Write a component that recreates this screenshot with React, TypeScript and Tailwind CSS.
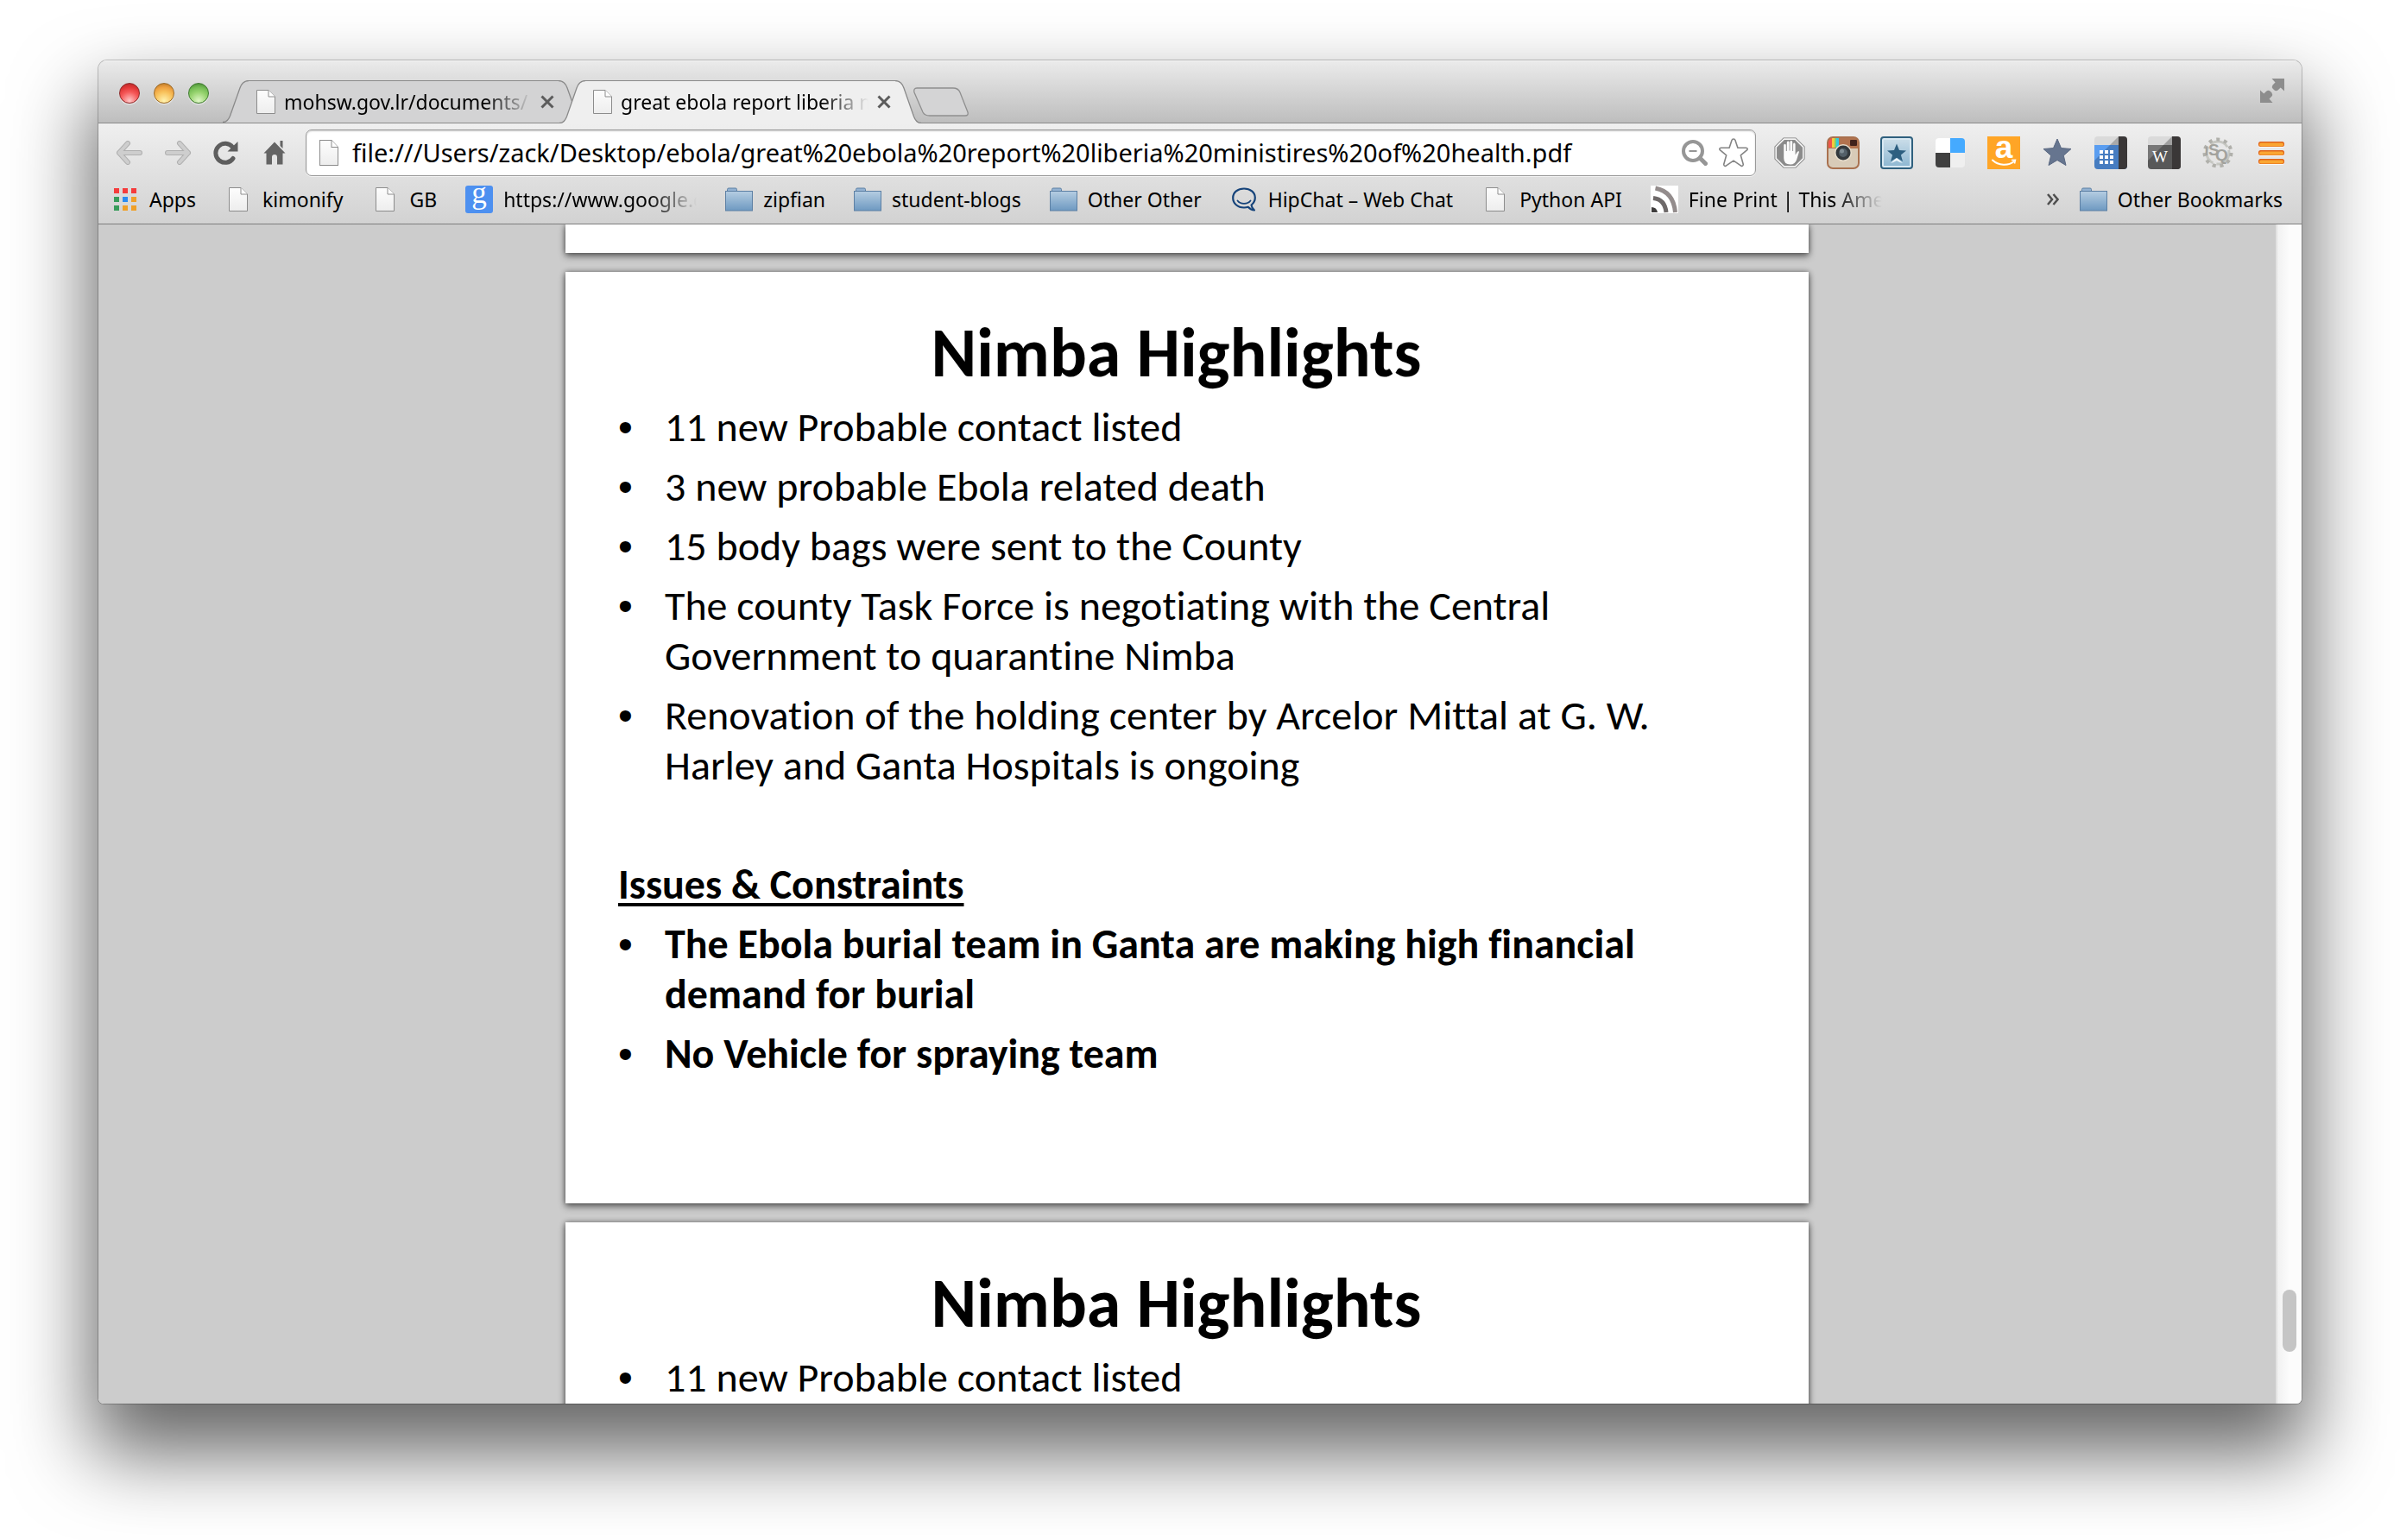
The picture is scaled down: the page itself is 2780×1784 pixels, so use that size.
import type { ReactNode } from 'react';

const UI_FONT = 'font-["Noto_Sans","Open_Sans",sans-serif]';
const FADE = '[mask-image:linear-gradient(to_right,black_calc(100%-56px),transparent)]';

function PageIcon({ className }: { className: string }) {
  return (
    <svg viewBox="0 0 22 28" preserveAspectRatio="none" className={className} aria-hidden="true">
      <defs>
        <linearGradient id="paper" x1="0" y1="0" x2="0" y2="1">
          <stop offset="0" stopColor="#fdfdfd" />
          <stop offset="1" stopColor="#ededed" />
        </linearGradient>
      </defs>
      <path d="M.5.5H14L21.500 8V27.500H.5Z" fill="url(#paper)" stroke="#8c8c8c" />
      <path d="M14 .5V8H21.500" fill="#fff" stroke="#8c8c8c" />
    </svg>
  );
}

function FolderIcon() {
  return (
    <svg viewBox="0 0 32 28" className="h-7 w-8" aria-hidden="true">
      <defs>
        <linearGradient id="folder" x1="0" y1="0" x2="0" y2="1">
          <stop offset="0" stopColor="#b5cde2" />
          <stop offset="1" stopColor="#6e99c1" />
        </linearGradient>
      </defs>
      <path d="M2.500 5V2.500Q2.500 1 4 1H12Q13.500 1 13.500 2.500V5" fill="#93b2d2" stroke="#5d80a4" />
      <rect x=".5" y="4.500" width="31" height="22.500" fill="url(#folder)" stroke="#5d80a4" />
    </svg>
  );
}

function AppsIcon() {
  const colors = ['#f53b3b', '#f53b3b', '#f53b3b', '#379c5a', '#2a8bf2', '#f0a028', '#379c5a', '#f0a028', '#f0a028'];
  return (
    <svg viewBox="0 0 26 26" className="h-[26px] w-[26px]" aria-hidden="true">
      {colors.map((c, i) => (
        <rect key={i} x={(i % 3) * 10} y={Math.floor(i / 3) * 10} width="6" height="6" fill={c} />
      ))}
    </svg>
  );
}

function GoogleIcon() {
  return (
    <svg viewBox="0 0 32 32" className="h-8 w-8" aria-hidden="true">
      <rect width="32" height="32" rx="3" fill="#4d90f0" />
      <text x="16" y="20" textAnchor="middle" fontSize="35" fill="#fff" className='font-["Liberation_Serif",serif]'>g</text>
    </svg>
  );
}

function HipChatIcon() {
  return (
    <svg viewBox="0 0 28 28" className="h-7 w-7" fill="none" stroke="#15437a" aria-hidden="true">
      <path d="M22.500 20.500C25.500 18 26.800 15 26.800 12C26.800 5.800 21.200 1.500 14 1.500S1.200 5.800 1.200 12.200S6.500 23.500 14 23.500C15.800 23.500 17.300 23.300 18.700 22.800C20.500 24.800 23 26.500 26 26.500C23.500 24.500 22.700 22.500 22.500 20.500Z" strokeWidth="2.200" strokeLinejoin="round" />
      <path d="M6.500 15.500C10 20 18 20 21.500 15.500" strokeWidth="1.800" strokeLinecap="round" />
    </svg>
  );
}

function FeedIcon() {
  return (
    <svg viewBox="0 0 32 32" className="h-8 w-8" aria-hidden="true">
      <rect width="32" height="32" fill="#fff" />
      <path d="M1 31V25Q7 25 8 31Z" fill="#3e3c3c" />
      <path d="M3 14.500Q16.500 16 18 31" fill="none" stroke="#6e6969" strokeWidth="5" />
      <path d="M5.500 3Q26.500 7 28.500 31" fill="none" stroke="#938c8c" strokeWidth="5" />
    </svg>
  );
}

const octagon = (c: number, r: number) =>
  Array.from({ length: 8 }, (_, i) => {
    const a = Math.PI / 8 + (i * Math.PI) / 4;
    return `${(c + r * Math.cos(a)).toFixed(2)},${(c + r * Math.sin(a)).toFixed(2)}`;
  }).join(' ');

function AdBlockIcon() {
  return (
    <svg viewBox="0 0 38 38" className="h-[38px] w-[38px]" aria-hidden="true">
      <polygon points={octagon(19, 19)} fill="#7c7c7c" />
      <polygon points={octagon(19, 18)} fill="#f4f4f4" />
      <polygon points={octagon(19, 16.2)} fill="#8b8b8b" />
      <path d="M12.200 21V10.500Q12.200 8.800 13.500 8.800T14.800 10.500V17H15.800V7.200Q15.800 5.400 17.200 5.400T18.600 7.200V16.500H19.400V6.600Q19.400 4.900 20.800 4.900T22.200 6.600V17H23.100V9.200Q23.100 7.600 24.300 7.600T25.600 9.200V21.500L28 17.700Q29.200 16.700 30.100 17.600L27.300 26.500Q25.500 32.500 19.800 32.500Q12.200 32.500 12.200 25Z" fill="#fcfcfc" />
    </svg>
  );
}

function CameraIcon() {
  return (
    <svg viewBox="0 0 38 38" className="h-[38px] w-[38px]" aria-hidden="true">
      <defs>
        <clipPath id="camera-body"><rect x="1" y="1" width="36" height="36" rx="6" /></clipPath>
      </defs>
      <g clipPath="url(#camera-body)">
        <rect width="38" height="38" fill="#d8cbb8" />
        <rect width="38" height="14" fill="#b2734f" />
        <rect x="2" width="4" height="13" fill="#f0564a" />
        <rect x="6" width="3" height="13" fill="#f5c93d" />
        <rect x="9" width="2" height="13" fill="#7fd36b" />
        <rect x="11" width="3" height="13" fill="#35c8e0" />
        <rect x="27" y="4" width="8" height="7" rx="1" fill="#3f211b" />
      </g>
      <rect x="1" y="1" width="36" height="36" rx="6" fill="none" stroke="#a9714f" strokeWidth="2" />
      <circle cx="19" cy="19" r="10" fill="#e6dccb" />
      <circle cx="19" cy="19" r="8.500" fill="#33393d" />
      <circle cx="19" cy="19" r="5" fill="#536069" />
      <circle cx="17.500" cy="17" r="2.500" fill="#7f8d95" />
    </svg>
  );
}

function StarTileIcon() {
  return (
    <svg viewBox="0 0 38 38" className="h-[38px] w-[38px]" aria-hidden="true">
      <defs>
        <linearGradient id="tile" x1="0" y1="0" x2="0" y2="1">
          <stop offset="0" stopColor="#c9dce8" />
          <stop offset="1" stopColor="#8fb8d2" />
        </linearGradient>
      </defs>
      <rect x="1" y="1" width="36" height="36" rx="3" fill="#d8e8f2" stroke="#2f607e" strokeWidth="2" />
      <rect x="4" y="4" width="30" height="30" fill="url(#tile)" />
      <path d="M12 31L19 25L26 31L23 30L19 28L15 30Z" fill="#f4f9fc" />
      <path d="M19 8.500L22 16L30 16.600L23.900 21.500L26 29L19 24.800L12 29L14.100 21.500L8 16.600L16 16Z" fill="#2d5f80" />
    </svg>
  );
}

function DeliciousIcon() {
  return (
    <svg viewBox="0 0 38 38" className="h-[38px] w-[38px]" aria-hidden="true">
      <defs>
        <clipPath id="quad"><rect x="2" y="2" width="34" height="34" rx="4" /></clipPath>
      </defs>
      <g clipPath="url(#quad)">
        <rect x="2" y="2" width="17" height="17" fill="#fff" />
        <rect x="19" y="2" width="17" height="17" fill="#45aaff" />
        <rect x="2" y="19" width="17" height="17" fill="#404040" />
        <rect x="19" y="19" width="17" height="17" fill="#efefef" />
      </g>
    </svg>
  );
}

function AmazonIcon() {
  return (
    <svg viewBox="0 0 38 38" className="h-[38px] w-[38px]" aria-hidden="true">
      <rect width="38" height="38" fill="#ffa526" />
      <text x="19" y="25" textAnchor="middle" fontSize="37" fill="#fff" className='font-["Liberation_Sans",sans-serif] font-bold'>a</text>
      <path d="M6 27.500C13 34 24 34.500 31 29" fill="none" stroke="#fff" strokeWidth="2" strokeLinecap="round" />
      <path d="M28 27.500L32.500 27.300L31.500 31.500" fill="none" stroke="#fff" strokeWidth="1.500" />
    </svg>
  );
}

function BlueStarIcon() {
  return (
    <svg viewBox="0 0 38 38" className="h-[38px] w-[38px]" aria-hidden="true">
      <path d="M19 3L23.500 13.600L35 14.500L26.300 22.200L29 33.500L19 27.500L9 33.500L11.700 22.200L3 14.500L14.500 13.600Z" fill="#66758f" stroke="#596781" strokeLinejoin="round" />
    </svg>
  );
}

function BookIcon({ id, light, dark, topDark, children }: { id: string; light: string; dark: string; topDark: string; children: ReactNode }) {
  return (
    <svg viewBox="0 0 38 38" className="h-[38px] w-[38px]" aria-hidden="true">
      <defs>
        <clipPath id={id}><rect width="38" height="38" rx="4" /></clipPath>
      </defs>
      <g clipPath={`url(#${id})`}>
        <rect width="38" height="10" fill="#dadada" />
        <rect y="10" width="38" height="28" fill={dark} />
        <path d="M0 10H18L0 28Z" fill={light} />
        <path d="M18 10L28 0V10Z" fill={topDark} />
        <rect x="28" width="10" height="38" fill="#3a3737" />
      </g>
      {children}
    </svg>
  );
}

function CalendarIcon() {
  return (
    <BookIcon id="cal" light="#5a9df0" dark="#467cc0" topDark="#a9a9a9">
      {[0, 1, 2].flatMap((r) => [0, 1, 2].map((c) => (
        <rect key={`${r}${c}`} x={6 + c * 6} y={16 + r * 6} width="4" height="4" fill="#fff" />
      )))}
    </BookIcon>
  );
}

function WikiIcon() {
  return (
    <BookIcon id="wiki" light="#777" dark="#585858" topDark="#a0a0a0">
      <text x="14" y="30" textAnchor="middle" fontSize="19" fill="#fff" className='font-["Liberation_Serif",serif]'>W</text>
    </BookIcon>
  );
}

function GearIcon() {
  return (
    <svg viewBox="0 0 38 38" className="h-[38px] w-[38px]" aria-hidden="true">
      <circle cx="19" cy="19" r="13" fill="none" stroke="#c6c7c2" strokeWidth="3" strokeDasharray="22 4" />
      <circle cx="19" cy="19" r="15.500" fill="none" stroke="#b0b0ab" strokeWidth="4" strokeDasharray="4 4.850" />
      <g fill="#a2a29d" className='font-["Liberation_Sans",sans-serif] font-bold'>
        <text x="4" y="22" fontSize="14">I</text>
        <text x="8" y="22" fontSize="19">S</text>
        <text x="16" y="28" fontSize="19">Q</text>
      </g>
    </svg>
  );
}

function MenuIcon() {
  return (
    <svg viewBox="0 0 38 38" className="h-[38px] w-[38px]" aria-hidden="true">
      {[6, 16, 26].map((y) => (
        <g key={y}>
          <rect x="4" y={y + 1} width="30" height="6" rx="2.500" fill="#fff" opacity=".7" />
          <rect x="4" y={y} width="30" height="6" rx="2.500" fill="#e0641a" />
          <rect x="5" y={y + 1.5} width="28" height="4" rx="2" fill="#faa632" />
        </g>
      ))}
    </svg>
  );
}

function BackIcon({ flip }: { flip?: boolean }) {
  return (
    <svg viewBox="0 0 32 28" className={flip ? 'h-7 w-8 -scale-x-100' : 'h-7 w-8'} fill="none" strokeLinecap="round" strokeLinejoin="round" aria-hidden="true">
      <path d="M14 3L4 14L14 25M4 14H28" stroke="#b0b0b0" strokeWidth="6" />
      <path d="M14 3L4 14L14 25M4 14H28" stroke="#cecece" strokeWidth="4" />
    </svg>
  );
}

function ReloadIcon() {
  return (
    <svg viewBox="0 0 32 28" className="h-7 w-8" aria-hidden="true">
      <path d="M23.500 7.500A11 11 0 1 0 24 20.500" fill="none" stroke="#5e5e5e" strokeWidth="5" strokeLinecap="round" />
      <path d="M29.500 1V12.500H17.500Z" fill="#5e5e5e" />
    </svg>
  );
}

function HomeIcon() {
  return (
    <svg viewBox="0 0 32 28" className="h-7 w-8" fill="#646464" aria-hidden="true">
      <path d="M22.500 0H25.500V9L22.500 6Z" />
      <path d="M16 1.500L28.500 14.500H25.500V27.500H19V19Q19 16 16 16T13 19V27.500H6.500V14.500H3.500Z" />
    </svg>
  );
}

function ZoomOutIcon() {
  return (
    <svg viewBox="0 0 30 30" className="h-[30px] w-[30px]" fill="none" stroke="#969696" aria-hidden="true">
      <circle cx="13" cy="13" r="11" strokeWidth="4" />
      <path d="M8.500 13H17.500" strokeWidth="2" />
      <path d="M21 21L27.500 27.500" strokeWidth="5" strokeLinecap="round" />
    </svg>
  );
}

function StarOutlineIcon() {
  return (
    <svg viewBox="0 0 36 36" className="h-9 w-9" aria-hidden="true">
      <path d="M18 2Q19.500 2 20 3.500L22.900 12.200H32.500Q35 12.800 33.800 14.700L26.300 20.800L29.300 31.500Q29 34 26.800 33.200L18 27.200L9.200 33.200Q7 34 6.700 31.500L9.700 20.800L2.200 14.700Q1 12.800 3.500 12.200H13.100L16 3.500Q16.500 2 18 2Z" fill="#fff" stroke="#848484" strokeWidth="1.600" strokeLinejoin="round" />
    </svg>
  );
}

function FullscreenIcon() {
  return (
    <svg viewBox="0 0 28 28" className="h-7 w-7" fill="#8d8d8d" aria-hidden="true">
      <path d="M28 0V14.500L23.700 10.500L20.500 13.500Q18.500 14.800 16.500 13.500L14.500 11.500Q13.200 9.500 14.500 7.500L17.500 4.500L13.500 0Z" />
      <path d="M0 28V13.500L4.300 17.500L7.500 14.500Q9.500 13.200 11.500 14.500L13.500 16.500Q14.800 18.500 13.500 20.500L10.500 23.500L14.500 28Z" />
    </svg>
  );
}

function TabEdge({ fill, flip }: { fill: string; flip?: boolean }) {
  return (
    <svg viewBox="0 0 30 50" preserveAspectRatio="none" className={flip ? 'h-full w-[30px] shrink-0 -scale-x-100' : 'h-full w-[30px] shrink-0'} aria-hidden="true">
      <path d="M0 50C5 50 7 46 8.500 42L20 9C22 3 25 .5 30 .5V50Z" fill={fill} />
      <path d="M0 49.500C5 49.500 7 46 8.500 42L20 9C22 3 25 .5 30 .5" fill="none" stroke="#8a8a8a" strokeWidth="1.300" />
    </svg>
  );
}

function Tab({ title, active }: { title: string; active?: boolean }) {
  const fill = active ? '#efefef' : '#d3d3d4';
  return (
    <div className={active ? 'z-10 -ml-[29px] flex h-[50px] w-[419px]' : 'mb-px flex h-[49px] w-[419px]'}>
      <TabEdge fill={fill} />
      <div className={`flex min-w-0 flex-1 items-center border-t border-[#8a8a8a] pr-[5px] pb-px pl-[9px] ${active ? 'bg-[#efefef]' : 'bg-[#d3d3d4]'}`}>
        <PageIcon className="h-7 w-[22px] shrink-0" />
        <button role="tab" aria-selected={!!active} className={`ml-[10px] min-w-0 flex-1 overflow-hidden text-left leading-[30px] whitespace-nowrap ${FADE}`}>
          {title}
        </button>
        <button aria-label={`Close ${title}`} className="ml-[10px] shrink-0">
          <svg viewBox="0 0 16 16" className="h-4 w-4" stroke="#5c5c5c" strokeWidth="3" aria-hidden="true">
            <path d="M1.500 1.500L14.500 14.500M14.500 1.500L1.500 14.500" />
          </svg>
        </button>
      </div>
      <TabEdge fill={fill} flip />
    </div>
  );
}

const LIGHTS = [
  { label: 'Close', css: 'border-[#8e2a2a] bg-[radial-gradient(circle_at_50%_90%,#ffc9c9_0%,#f65a5a_45%,#e23838_70%,#a82525_100%)]' },
  { label: 'Minimize', css: 'border-[#9a6a28] bg-[radial-gradient(circle_at_50%_90%,#fff3b0_0%,#f8c25c_45%,#eda040_70%,#a86a20_100%)]' },
  { label: 'Zoom', css: 'border-[#3f7a30] bg-[radial-gradient(circle_at_50%_90%,#e0f8c8_0%,#98d470_45%,#74bc54_70%,#3c7a2c_100%)]' },
];

const BOOKMARKS: { label: string; icon: ReactNode; fade?: boolean }[] = [
  { label: 'Apps', icon: <AppsIcon /> },
  { label: 'kimonify', icon: <PageIcon className="h-7 w-[22px]" /> },
  { label: 'GB', icon: <PageIcon className="h-7 w-[22px]" /> },
  { label: 'https://www.google.com', icon: <GoogleIcon />, fade: true },
  { label: 'zipfian', icon: <FolderIcon /> },
  { label: 'student-blogs', icon: <FolderIcon /> },
  { label: 'Other Other', icon: <FolderIcon /> },
  { label: 'HipChat – Web Chat', icon: <HipChatIcon /> },
  { label: 'Python API', icon: <PageIcon className="h-7 w-[22px]" /> },
  { label: 'Fine Print | This American', icon: <FeedIcon />, fade: true },
];

const EXTENSIONS: { label: string; icon: ReactNode }[] = [
  { label: 'AdBlock', icon: <AdBlockIcon /> },
  { label: 'Instagram', icon: <CameraIcon /> },
  { label: 'Bookmark tile', icon: <StarTileIcon /> },
  { label: 'Delicious', icon: <DeliciousIcon /> },
  { label: 'Amazon', icon: <AmazonIcon /> },
  { label: 'Favourites', icon: <BlueStarIcon /> },
  { label: 'Calendar', icon: <CalendarIcon /> },
  { label: 'Wikipedia', icon: <WikiIcon /> },
  { label: 'Settings', icon: <GearIcon /> },
  { label: 'Menu', icon: <MenuIcon /> },
];

const HIGHLIGHTS = [
  '11 new Probable contact listed',
  '3 new probable Ebola related death',
  '15 body bags were sent to the County',
  'The county Task Force is negotiating with the Central Government to quarantine Nimba',
  'Renovation of the holding center by Arcelor Mittal at G. W. Harley and Ganta Hospitals is ongoing',
];

const ISSUES = ['The Ebola burial team in Ganta are making high financial demand for burial', 'No Vehicle for spraying team'];

const PAPER = 'w-full max-w-[1440px] shrink-0 bg-white shadow-[0_0_6px_rgba(0,0,0,0.45),0_4px_8px_rgba(0,0,0,0.45)]';

function Bullets({ items }: { items: string[] }) {
  return (
    <ul className="flex flex-col gap-[11px]">
      {items.map((item) => (
        <li key={item} className="flex">
          <span className='w-[54px] shrink-0 font-["Liberation_Sans",sans-serif] font-normal' aria-hidden="true">•</span>
          <span>{item}</span>
        </li>
      ))}
    </ul>
  );
}

function Slide() {
  return (
    <article className={`${PAPER} h-[1079px] pt-[45px] pr-[86px] pl-[61px] font-["Carlito","Lato",sans-serif] text-[48px] leading-[58px] text-black [font-variant-ligatures:none]`}>
      <h1 className="mb-2 text-center text-[80px] leading-[98px] font-bold">Nimba Highlights</h1>
      <Bullets items={HIGHLIGHTS} />
      <h2 className="mt-20 mb-[11px] font-bold underline decoration-4 underline-offset-[5px] [text-decoration-skip-ink:none]">Issues &amp; Constraints</h2>
      <div className="font-bold">
        <Bullets items={ISSUES} />
      </div>
    </article>
  );
}

export default function App() {
  return (
    <div className={`flex h-screen flex-col bg-white px-[114px] pt-[70px] pb-[158px] text-[23px] leading-8 text-black ${UI_FONT}`}>
      <div className="flex min-h-0 flex-1 flex-col overflow-hidden rounded-t-[10px] rounded-b-[6px] shadow-[0_0_0_1px_rgba(0,0,0,0.22),0_50px_90px_8px_rgba(0,0,0,0.6)]">
        <header className="flex h-[73px] shrink-0 items-end bg-[linear-gradient(#ebebeb,#bdbdbd)] pl-6 shadow-[inset_0_-1px_0_#8a8a8a,inset_0_1px_0_#f6f6f6]">
          <div className="mr-4 mb-[23px] flex gap-4">
            {LIGHTS.map((l) => (
              <button key={l.label} aria-label={l.label} className={`h-6 w-6 rounded-full border shadow-[0_1px_1px_rgba(255,255,255,0.7)] ${l.css}`} />
            ))}
          </div>
          <div role="tablist" className="flex items-end">
            <Tab title="mohsw.gov.lr/documents/" />
            <Tab title="great ebola report liberia ministires of health.pdf" active />
          </div>
          <button aria-label="New tab" className="mb-2 -ml-[9px]">
            <svg viewBox="0 0 64 34" className="h-[34px] w-16" aria-hidden="true">
              <path d="M4 1H46Q52 1 54 6L63 29Q64 33 60 33H19Q13 33 11 29L1 6Q0 1 4 1Z" fill="#d4d4d5" stroke="#8f8f8f" strokeWidth="1.300" />
            </svg>
          </button>
          <button aria-label="Full screen" className="mr-5 mb-[24px] ml-auto">
            <FullscreenIcon />
          </button>
        </header>

        <div className="flex h-[117px] shrink-0 flex-col gap-[11px] border-b border-[#7e7e7e] bg-[linear-gradient(#efefef,#d2d2d2)] pt-[7px]">
          <div className="flex items-center pr-4 pl-5">
            <nav className="mr-5 flex gap-6" aria-label="Navigation">
              <button aria-label="Back"><BackIcon /></button>
              <button aria-label="Forward"><BackIcon flip /></button>
              <button aria-label="Reload"><ReloadIcon /></button>
              <button aria-label="Home"><HomeIcon /></button>
            </nav>
            <div className="mr-5 flex h-[54px] min-w-0 flex-1 items-center rounded-[7px] border border-[#999] bg-white pr-[7px] pl-[15px] shadow-[inset_0_1px_2px_rgba(0,0,0,0.2),0_1px_0_rgba(255,255,255,0.6)]">
              <PageIcon className="h-[30px] w-[22px] shrink-0" />
              <input
                aria-label="Address"
                className="ml-4 min-w-0 flex-1 bg-transparent text-[29px] leading-10 outline-none"
                defaultValue="file:///Users/zack/Desktop/ebola/great%20ebola%20report%20liberia%20ministires%20of%20health.pdf"
              />
              <button aria-label="Zoom out" className="mr-3"><ZoomOutIcon /></button>
              <button aria-label="Bookmark this page"><StarOutlineIcon /></button>
            </div>
            <div className="flex gap-6">
              {EXTENSIONS.map((e) => (
                <button key={e.label} aria-label={e.label}>{e.icon}</button>
              ))}
            </div>
          </div>

          <nav className="flex h-8 items-center pr-[22px] pl-[15px] whitespace-nowrap" aria-label="Bookmarks">
            <div className="flex gap-[33px]">
              {BOOKMARKS.map((b) => (
                <a key={b.label} href="#" className="flex items-center gap-3">
                  <span className="flex h-8 w-8 items-center justify-center">{b.icon}</span>
                  <span className={b.fade ? `w-[224px] overflow-hidden ${FADE}` : ''}>{b.label}</span>
                </a>
              ))}
            </div>
            <button aria-label="More bookmarks" className="mr-6 ml-auto">
              <svg viewBox="0 0 14 14" className="h-3.5 w-3.5" fill="none" stroke="#4f4f4f" strokeWidth="2.500" aria-hidden="true">
                <path d="M1 1L6 7L1 13M7.500 1L12.500 7L7.500 13" />
              </svg>
            </button>
            <a href="#" className="flex items-center gap-3">
              <FolderIcon />
              Other Bookmarks
            </a>
          </nav>
        </div>

        <div className="flex min-h-0 flex-1 bg-[#ccc]">
          <main className="flex min-w-0 flex-1 flex-col items-center gap-[22px] overflow-hidden">
            <div className={`${PAPER} h-[33px]`} />
            <Slide />
            <Slide />
          </main>
          <div className="flex w-[30px] shrink-0 flex-col items-center justify-end border-l-2 border-[#e2e2e2] bg-[linear-gradient(to_right,#f1f1f1,#fcfcfc_50%)] pb-[60px]">
            <div className="h-[72px] w-4 rounded-full bg-[#c5c5c5]" />
          </div>
        </div>
      </div>
    </div>
  );
}
